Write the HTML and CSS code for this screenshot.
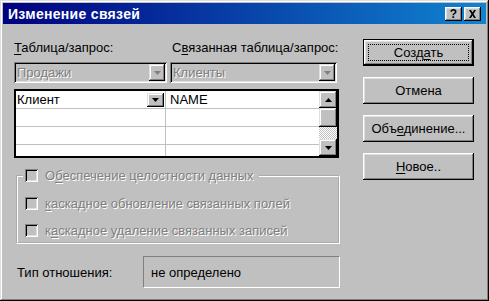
FILE: index.html
```html
<!DOCTYPE html>
<html lang="ru">
<head>
    <meta charset="UTF-8">
    <title>Изменение связей</title>
    <link rel="stylesheet" href="styles.css">
</head>
<body>

<div class="window">

    <!-- Title bar -->
    <div class="titlebar">
        <span class="title">Изменение связей</span>
        <div class="title-btns">
            <span class="tbtn">?</span>
            <span class="tbtn">
                <svg width="9" height="8" viewBox="0 0 9 8"><path d="M1 0h2l1.5 2.5L6 0h2L5.5 4 8 8H6L4.5 5.5 3 8H1l2.5-4z" fill="#000"/></svg>
            </span>
        </div>
    </div>

    <div class="content">

        <div class="left">
            <div class="labels">
                <span class="lbl-a"><u>Т</u>аблица/запрос:</span>
                <span>С<u>в</u>язанная таблица/запрос:</span>
            </div>

            <div class="combos">
                <div class="combo combo-a">
                    <span class="combo-text">Продажи</span>
                    <span class="drop"><svg width="7" height="4" viewBox="0 0 7 4"><path d="M0 0h7L3.5 4z" fill="#808080"/></svg></span>
                </div>
                <div class="combo combo-b">
                    <span class="combo-text">Клиенты</span>
                    <span class="drop"><svg width="7" height="4" viewBox="0 0 7 4"><path d="M0 0h7L3.5 4z" fill="#808080"/></svg></span>
                </div>
            </div>

            <!-- Field pairs -->
            <div class="grid">
                <div class="rows">
                    <div class="row">
                        <div class="cell cell-a"><span>Клиент</span>
                            <span class="drop small"><svg width="7" height="4" viewBox="0 0 7 4"><path d="M0 0h7L3.5 4z" fill="#000"/></svg></span>
                        </div>
                        <div class="cell cell-b">NAME</div>
                    </div>
                    <div class="row"><div class="cell cell-a"></div><div class="cell cell-b"></div></div>
                    <div class="row"><div class="cell cell-a"></div><div class="cell cell-b"></div></div>
                    <div class="row"><div class="cell cell-a"></div><div class="cell cell-b"></div></div>
                </div>
                <div class="scrollbar">
                    <span class="sbtn"><svg width="7" height="4" viewBox="0 0 7 4"><path d="M0 4h7L3.5 0z" fill="#000"/></svg></span>
                    <span class="thumb"></span>
                    <span class="track"></span>
                    <span class="sbtn"><svg width="7" height="4" viewBox="0 0 7 4"><path d="M0 0h7L3.5 4z" fill="#000"/></svg></span>
                </div>
            </div>

            <fieldset class="group">
                <legend class="check"><span class="box"></span><span>О<u>б</u>еспечение целостности данных</span></legend>
                <div class="check first"><span class="box"></span><span><u>к</u>аскадное обновление связанных полей</span></div>
                <div class="check"><span class="box"></span><span>к<u>а</u>скадное удаление связанных записей</span></div>
            </fieldset>

            <div class="type-row">
                <span class="type-label">Тип отношения:</span>
                <div class="type-field">не определено</div>
            </div>
        </div>

        <div class="right">
            <div class="btn default"><span class="focus"><span>Созд<u>а</u>ть</span></span></div>
            <div class="btn"><span>Отмена</span></div>
            <div class="btn"><span>Объ<u>е</u>динение...</span></div>
            <div class="btn"><span><u>Н</u>овое..</span></div>
        </div>

    </div>
</div>

</body>
</html>
```

FILE: styles.css
```css
body {
    margin: 0;
    font-family: "Liberation Sans", Arial, sans-serif;
    font-size: 13px;
    color: #000;
    background-color: #c0c0c0;
}

u {
    text-decoration-thickness: 1px;
    text-underline-offset: 2px;
}

.window {
    width: 489px;
    height: 301px;
    box-sizing: border-box;
    padding: 3px;
    background-color: #c0c0c0;
    box-shadow: inset -1px -1px #000, inset 1px 1px #dfdfdf,
                inset -2px -2px #808080, inset 2px 2px #fff;
}

.titlebar {
    height: 21px;
    display: flex;
    align-items: center;
    justify-content: space-between;
    padding: 0 5px 0 5px;
    background: linear-gradient(90deg, #000080, #1084d0);
    color: #fff;
}

.title {
    font-weight: bold;
    font-size: 14px;
    letter-spacing: 0.3px;
}

.title-btns {
    display: flex;
    gap: 2px;
}

.tbtn {
    width: 17px;
    height: 14px;
    display: flex;
    align-items: center;
    justify-content: center;
    background-color: #c0c0c0;
    color: #000;
    font-weight: bold;
    font-size: 12px;
    box-shadow: inset -1px -1px #000, inset 1px 1px #fff,
                inset -2px -2px #808080, inset 2px 2px #dfdfdf;
}

.content {
    display: flex;
    padding-left: 11px;
}

.left {
    width: 326px;
    padding-top: 16px;
}

.labels {
    display: flex;
    height: 15px;
    line-height: 15px;
}

.lbl-a {
    width: 158px;
}

.combos {
    display: flex;
    gap: 3px;
    margin-top: 7px;
}

.combo {
    height: 21px;
    box-sizing: border-box;
    display: flex;
    align-items: center;
    justify-content: space-between;
    padding: 2px;
    box-shadow: inset 1px 1px #808080, inset -1px -1px #fff,
                inset 2px 2px #000, inset -2px -2px #dfdfdf;
}

.combo-a {
    width: 153px;
}

.combo-b {
    width: 167px;
}

.combo-text {
    padding-left: 1px;
    color: #808080;
    text-shadow: 1px 1px 0 #fff;
}

.drop {
    width: 16px;
    height: 17px;
    display: flex;
    align-items: center;
    justify-content: center;
    background-color: #c0c0c0;
    box-shadow: inset -1px -1px #000, inset 1px 1px #dfdfdf,
                inset -2px -2px #808080, inset 2px 2px #fff;
}

.drop.small {
    width: 17px;
    height: 14px;
}

.grid {
    display: flex;
    width: 325px;
    height: 69px;
    box-sizing: border-box;
    margin-top: 6px;
    border: 2px solid #000;
    background-color: #fff;
    overflow: hidden;
}

.rows {
    flex: 1;
}

.row {
    display: flex;
    height: 17px;
    border-bottom: 1px solid #c0c0c0;
}

.cell {
    height: 17px;
    line-height: 17px;
}

.cell-a {
    width: 150px;
    padding-left: 1px;
    display: flex;
    align-items: center;
    justify-content: space-between;
    box-sizing: border-box;
    border-right: 1px solid #c0c0c0;
    padding-right: 1px;
}

.cell-b {
    flex: 1;
    padding-left: 4px;
}

.scrollbar {
    width: 18px;
    display: flex;
    flex-direction: column;
}

.sbtn, .thumb {
    display: flex;
    align-items: center;
    justify-content: center;
    background-color: #c0c0c0;
    box-shadow: inset -1px -1px #000, inset 1px 1px #dfdfdf,
                inset -2px -2px #808080, inset 2px 2px #fff;
}

.sbtn {
    height: 17px;
}

.thumb {
    height: 19px;
}

.track {
    height: 12px;
    background: repeating-conic-gradient(#fff 0 25%, #c0c0c0 0 50%) 0 0 / 2px 2px;
}

.group {
    width: 324px;
    box-sizing: border-box;
    margin: 10px 0 0 2px;
    padding: 0 6px 4px 5px;
    border: 2px groove #fff;
}

.group legend {
    padding: 0 5px 0 2px;
}

.check {
    display: flex;
    align-items: center;
    gap: 7px;
    height: 15px;
    color: #808080;
    text-shadow: 1px 1px 0 #fff;
}

div.check {
    margin: 12px 0 0 2px;
}

div.check.first {
    margin-top: 13px;
}

.box {
    width: 13px;
    height: 13px;
    flex-shrink: 0;
    background-color: #c0c0c0;
    box-shadow: inset 1px 1px #808080, inset -1px -1px #fff,
                inset 2px 2px #000, inset -2px -2px #dfdfdf;
}

.type-row {
    display: flex;
    align-items: center;
    margin-top: 12px;
}

.type-label {
    width: 126px;
    margin-left: 3px;
}

.type-field {
    width: 197px;
    height: 32px;
    box-sizing: border-box;
    display: flex;
    align-items: center;
    padding-left: 7px;
    border: 1px solid;
    border-color: #808080 #fff #fff #808080;
}

.right {
    width: 111px;
    margin-left: 23px;
    padding-top: 15px;
    display: flex;
    flex-direction: column;
    gap: 11px;
}

.btn {
    height: 27px;
    box-sizing: border-box;
    display: flex;
    align-items: center;
    justify-content: center;
    background-color: #c0c0c0;
    box-shadow: inset -1px -1px #000, inset 1px 1px #fff,
                inset -2px -2px #808080, inset 2px 2px #dfdfdf;
}

.btn.default {
    border: 1px solid #000;
    padding: 4px;
}

.btn .focus {
    flex: 1;
    align-self: stretch;
    display: flex;
    align-items: center;
    justify-content: center;
    border: 1px dotted #000;
}
```
